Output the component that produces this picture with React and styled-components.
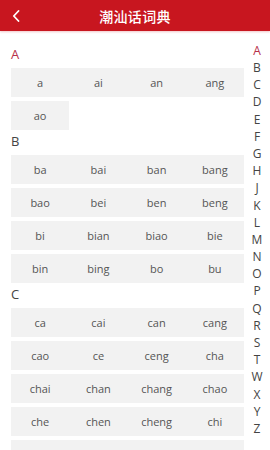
import React from 'react';
import styled, { createGlobalStyle } from 'styled-components';

const GlobalStyle = createGlobalStyle`
  html, body {
    margin: 0;
    padding: 0;
    background: #fff;
  }
  body {
    font-family: "Open Sans", "Noto Sans", "Noto Sans CJK SC", sans-serif;
  }
`;

const Page = styled.div`
  width: 270px;
  height: 450px;
  display: flex;
  flex-direction: column;
  overflow: hidden;
  background: #fff;
`;

const Header = styled.div`
  height: 31px;
  flex: none;
  display: flex;
  align-items: center;
  justify-content: center;
  position: relative;
  background: #c8161f;
  box-shadow: 0 1px 2px rgba(200, 22, 31, 0.25);
`;

const Title = styled.div`
  color: #fff;
  font-family: "Noto Sans CJK SC", sans-serif;
  font-size: 14px;
  font-weight: 500;
  letter-spacing: 0.3px;
`;

const BackButton = styled.div`
  position: absolute;
  left: 10px;
  top: 9px;
  width: 12px;
  height: 13px;
  display: flex;
  align-items: center;
  justify-content: center;
`;

const Body = styled.div`
  flex: 1;
  display: flex;
  min-height: 0;
`;

const List = styled.div`
  flex: 1;
  padding: 12px 0 0 11px;
  overflow: hidden;
`;

const Section = styled.div`
  display: flex;
  flex-direction: column;
`;

const SectionLabel = styled.div`
  height: 25px;
  line-height: 23px;
  font-size: 13px;
  color: ${p => (p.$active ? '#b83049' : '#444')};
`;

const Grid = styled.div`
  display: grid;
  grid-template-columns: repeat(4, 58.25px);
  row-gap: 4px;
`;

const Cell = styled.div`
  height: 29px;
  display: flex;
  align-items: center;
  justify-content: center;
  background: #f2f2f2;
  color: #555;
  font-size: 11px;
`;

const Index = styled.div`
  width: 26px;
  flex: none;
  display: flex;
  flex-direction: column;
  align-items: center;
  align-self: center;
  margin-top: -2px;
`;

const IndexLetter = styled.div`
  height: 17.2px;
  line-height: 17.2px;
  font-size: 12px;
  color: ${p => (p.$active ? '#b83049' : '#444')};
`;

const sections = [
  { letter: 'A', items: ['a', 'ai', 'an', 'ang', 'ao'] },
  {
    letter: 'B',
    items: ['ba', 'bai', 'ban', 'bang', 'bao', 'bei', 'ben', 'beng', 'bi', 'bian', 'biao', 'bie', 'bin', 'bing', 'bo', 'bu'],
  },
  {
    letter: 'C',
    items: [
      'ca', 'cai', 'can', 'cang', 'cao', 'ce', 'ceng', 'cha', 'chai', 'chan', 'chang', 'chao',
      'che', 'chen', 'cheng', 'chi', 'chia', 'chiam', 'chian', 'chiang',
    ],
  },
];

const letters = 'A B C D E F G H J K L M N O P Q R S T W X Y Z'.split(' ');

const App = () => {
  return (
    <Page>
      <GlobalStyle />
      <Header>
        <BackButton>
          <svg width="8" height="12" viewBox="0 0 8 12" fill="none">
            <path d="M6.5 1 L1.8 6 L6.5 11" stroke="#fff" strokeWidth="1.8" strokeLinecap="round" strokeLinejoin="round" />
          </svg>
        </BackButton>
        <Title>潮汕话词典</Title>
      </Header>
      <Body>
        <List>
          {sections.map((s, i) => (
            <Section key={s.letter}>
              <SectionLabel $active={i === 0}>{s.letter}</SectionLabel>
              <Grid>
                {s.items.map(item => (
                  <Cell key={item}>{item}</Cell>
                ))}
              </Grid>
            </Section>
          ))}
        </List>
        <Index>
          {letters.map((l, i) => (
            <IndexLetter key={l} $active={i === 0}>{l}</IndexLetter>
          ))}
        </Index>
      </Body>
    </Page>
  );
};

export default App;
